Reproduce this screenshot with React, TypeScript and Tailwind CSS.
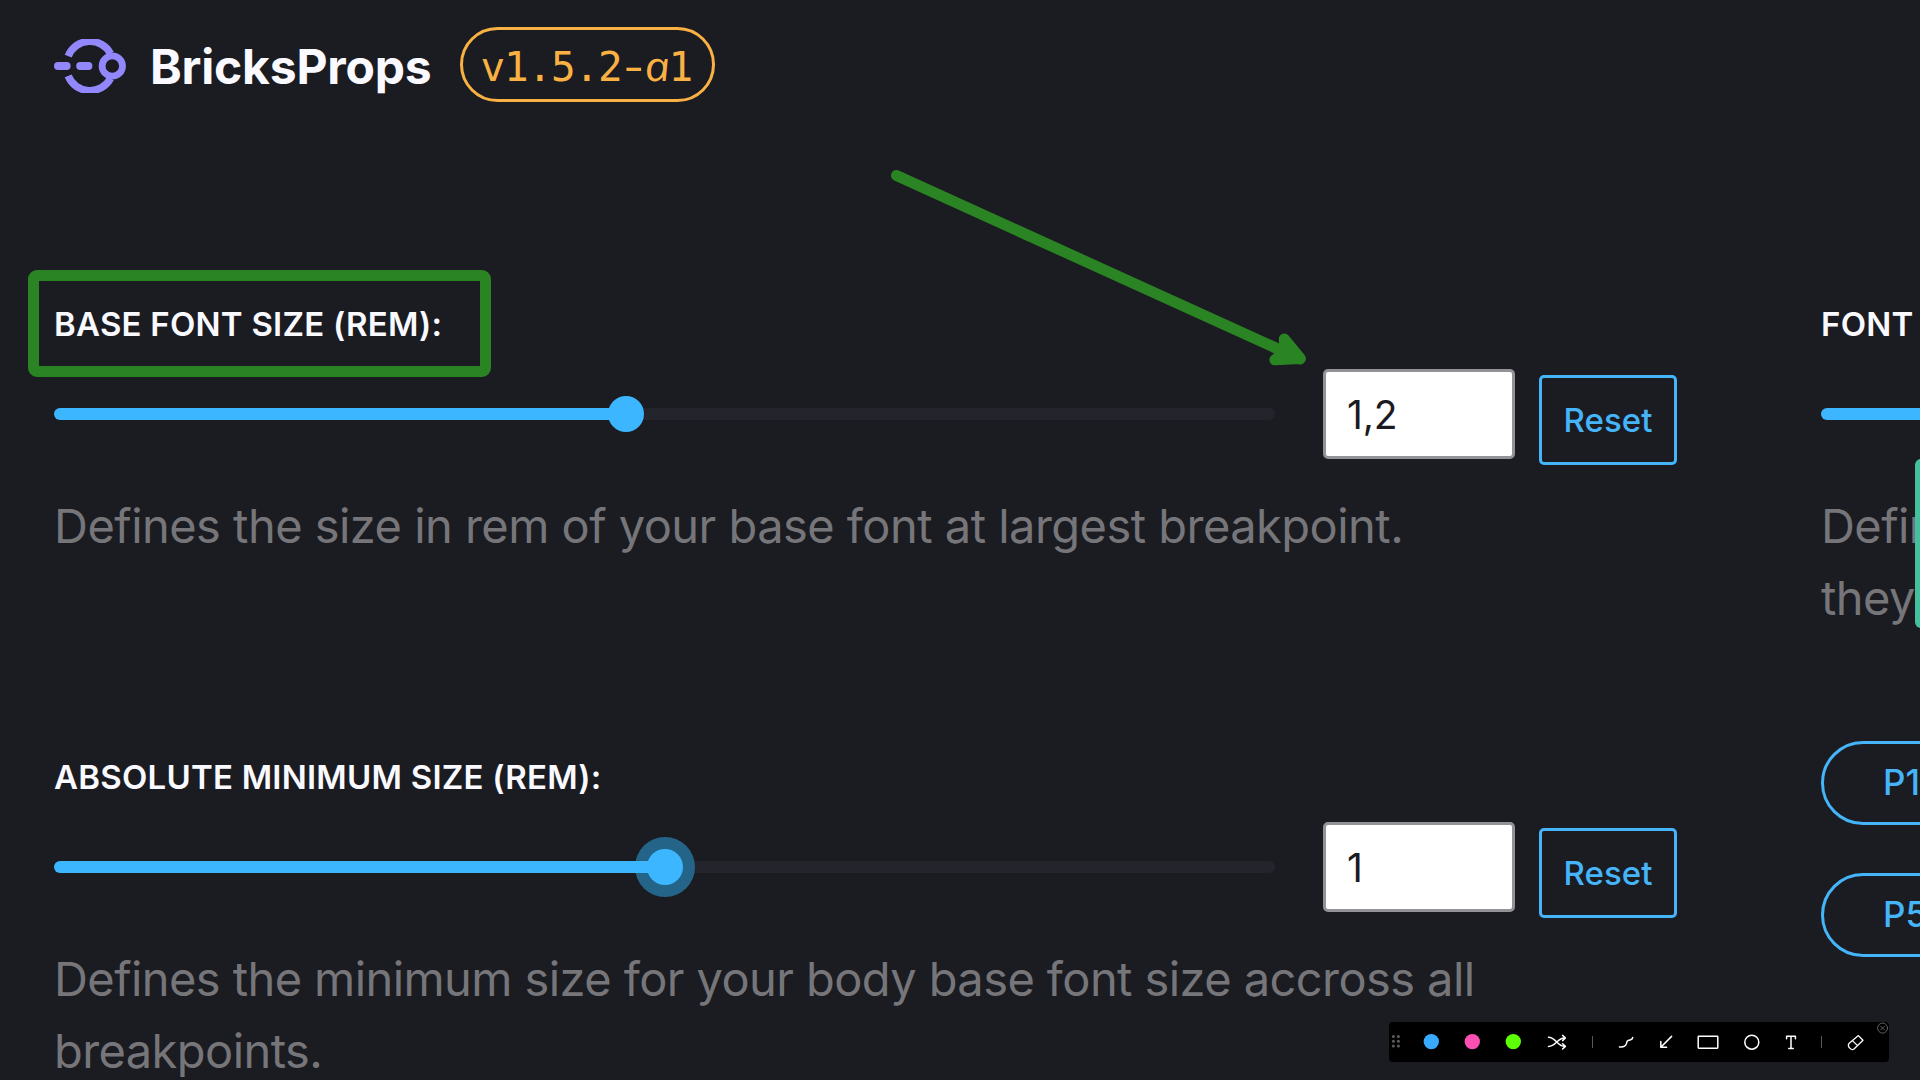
import type { ReactNode } from "react";

function Logo() {
  return (
    <svg className="h-[54px] w-[72px] shrink-0" viewBox="0 0 72 54" fill="none" stroke="#9388fb">
      <path d="M14.2 17.2A23.4 23.4 0 0 1 56.5 14.5M14.2 36.8A23.4 23.4 0 0 0 56.5 39.5" strokeWidth="7.4" />
      <circle cx="58.3" cy="27" r="10.2" strokeWidth="6.8" />
      <path d="M4 27H12.6M26.2 27H34.4" strokeWidth="8" strokeLinecap="round" />
    </svg>
  );
}

function Slider({ value, focused }: { value: number; focused?: boolean }) {
  return (
    <div className="relative h-3 w-[1221px] shrink-0 rounded-full bg-[#24242c]">
      {focused && (
        <div className="absolute -top-6 size-[60px] -translate-x-1/2 rounded-full bg-[#256489]" style={{ left: value }} />
      )}
      <div className="relative h-3 rounded-full bg-[#3cb6ff]" style={{ width: value }} />
      <div className="absolute -top-3 size-9 -translate-x-1/2 rounded-full bg-[#3cb6ff]" style={{ left: value }} />
    </div>
  );
}

interface SettingProps {
  label: string;
  value: number;
  amount?: string;
  focused?: boolean;
  children: ReactNode;
}

function Setting({ label, value, amount, focused, children }: SettingProps) {
  return (
    <section className="h-[453px] w-[1623px] shrink-0">
      <h2 className="h-[72px] text-[33px] leading-[73px] font-semibold tracking-[0.23px] whitespace-nowrap text-[#f9f9ff]">{label}</h2>
      <div className="flex h-[108px] items-center">
        <Slider value={value} focused={focused} />
        {amount && (
          <>
            <div className="ml-12 flex h-[90px] w-48 items-center rounded-[5px] border-3 border-[#929297] bg-white pt-[3px] pl-[21px] text-[39px] tracking-[-0.2px] text-[#1b1b1f]">
              {amount}
            </div>
            <div className="mt-3 ml-6 flex h-[90px] w-[138px] items-center justify-center rounded-[5px] border-3 border-[#45b4f8] pt-0.5 text-[33px] font-medium tracking-[0.1px] text-[#45b4f8]">
              Reset
            </div>
          </>
        )}
      </div>
      <p className="mt-[22px] text-[47px] leading-[72px] font-[430] tracking-[-0.58px] whitespace-nowrap text-[#76767a]">{children}</p>
    </section>
  );
}

function Preset({ name }: { name: string }) {
  return (
    <div className="flex h-[84px] w-[210px] items-center rounded-full border-3 border-[#45b4f8] pb-0.5 pl-[59px] text-[35px] font-medium text-[#45b4f8]">
      {name}
    </div>
  );
}

function Annotations() {
  return (
    <>
      <div className="absolute top-[270px] left-[28px] h-[107px] w-[463px] rounded-[9px] border-11 border-[#2b8423]" />
      <svg
        className="absolute top-[160px] left-[880px] h-[220px] w-[440px]"
        viewBox="880 160 440 220"
        fill="#2b8423"
        stroke="#2b8423"
        strokeWidth="11"
        strokeLinecap="round"
        strokeLinejoin="round"
      >
        <path d="M896.5 175.5L1300 359" />
        <path d="M1284.3 339L1300.3 358.5L1274.8 359.8L1285 352Z" />
      </svg>
    </>
  );
}

function DrawToolbar() {
  return (
    <div className="absolute top-[1022px] left-[1389px] flex h-10 w-[500px] items-center rounded-[4px] bg-black">
      <svg className="h-10 w-[500px]" viewBox="0 0 500 40" fill="none" stroke="#fff" strokeWidth="1.5" strokeLinecap="round" strokeLinejoin="round">
        <g fill="#5c5c5c" stroke="none">
          <circle cx="4.4" cy="14.4" r="1.5" />
          <circle cx="9.4" cy="14.4" r="1.5" />
          <circle cx="4.4" cy="19.2" r="1.5" />
          <circle cx="9.4" cy="19.2" r="1.5" />
          <circle cx="4.4" cy="24" r="1.5" />
          <circle cx="9.4" cy="24" r="1.5" />
        </g>
        <g stroke="none">
          <circle cx="42.3" cy="19.6" r="7.7" fill="#37a9ff" />
          <circle cx="83.3" cy="19.6" r="7.7" fill="#fb4fb4" />
          <circle cx="124.3" cy="19.6" r="7.7" fill="#5cff05" />
        </g>
        <path d="M159.5 15.2C167 15.2 168 24.4 175.8 24.4M159.5 24.4C167 24.4 168 16 175.8 16M173.6 13.4L176.4 16L173.6 18.6M173.6 21.8L176.4 24.4L173.6 27" />
        <path d="M203.5 14.5V25.5M432.5 14.5V25.5" stroke="#5a5a5a" strokeWidth="1" />
        <path d="M230.4 24.9C234 25.3 236.4 24.7 237.4 21.8C238 19.6 237.6 18.8 239.6 18.2C242.4 17.6 243.4 18 243.7 15.6" />
        <path d="M282.6 14.4L271.8 25.2M271.8 19.4V25.2H277.6" />
        <rect x="309.2" y="14.2" width="19.6" height="12" rx="0.6" />
        <circle cx="362.8" cy="20.2" r="7" />
        <path d="M397.6 16.8V14.3H406.4V16.8M402 14.3V26.3M399.8 26.4H404.2" />
        <path d="M460.2 21.2L469.4 13.6L474 18.2L465 27C463.6 28 462.2 27.6 461 26.4C459.4 24.8 458.6 22.8 460.2 21.2ZM463.4 18.6L468.6 23.6" strokeWidth="1.3" />
        <g stroke="#777" strokeWidth="0.8">
          <circle cx="493.6" cy="6.1" r="5" />
          <path d="M491.7 4.2L495.5 8M495.5 4.2L491.7 8" />
        </g>
      </svg>
    </div>
  );
}

function VersionBadge() {
  return (
    <div className="ml-7 flex h-[75px] w-[255px] items-center rounded-full border-3 border-[#f9b144] pt-[6px] pl-[18px] font-['DejaVu_Sans_Mono',monospace] text-[41px] tracking-[-1.2px] text-[#f9b144]">
      <span className="whitespace-nowrap">
        v1.5.2
        <span className="inline-block origin-[11px_50%] scale-x-[1.4]">-</span>
        <i className="inline-block w-[23.5px] scale-x-110 skew-x-[7deg] text-center font-['Open_Sans',sans-serif] leading-none font-medium tracking-normal">a</i>
        1
      </span>
    </div>
  );
}

export default function App() {
  return (
    <main className="relative h-[1080px] w-[1920px] overflow-hidden bg-[#1b1c21] font-['Inter',sans-serif]">
      <header className="flex h-[288px] items-start pt-[27px] pl-[54px]">
        <div className="flex h-[78px] items-center">
          <Logo />
          <h1 className="ml-6 pt-0.5 text-5xl leading-[78px] font-bold tracking-[-0.2px] text-[#f9f9ff]">BricksProps</h1>
        </div>
        <VersionBadge />
      </header>
      <div className="flex gap-36 pl-[54px]">
        <div>
          <Setting label="BASE FONT SIZE (REM):" value={571.5} amount="1,2">
            <span className="tracking-[-0.53px]">Defines the size in rem of your base font at largest breakpoint.</span>
          </Setting>
          <Setting label="ABSOLUTE MINIMUM SIZE (REM):" value={610.5} amount="1" focused>
            Defines the minimum size for your body base font size accross all
            <br />
            breakpoints.
          </Setting>
        </div>
        <div>
          <Setting label="FONT" value={610}>
            Defin
            <br />
            they
          </Setting>
          <div className="flex flex-col gap-12">
            <Preset name="P1" />
            <Preset name="P5" />
          </div>
        </div>
      </div>
      <div className="absolute top-[459px] left-[1915px] h-[169px] w-10 rounded-[6px] bg-[#43c09c]" />
      <Annotations />
      <DrawToolbar />
    </main>
  );
}
